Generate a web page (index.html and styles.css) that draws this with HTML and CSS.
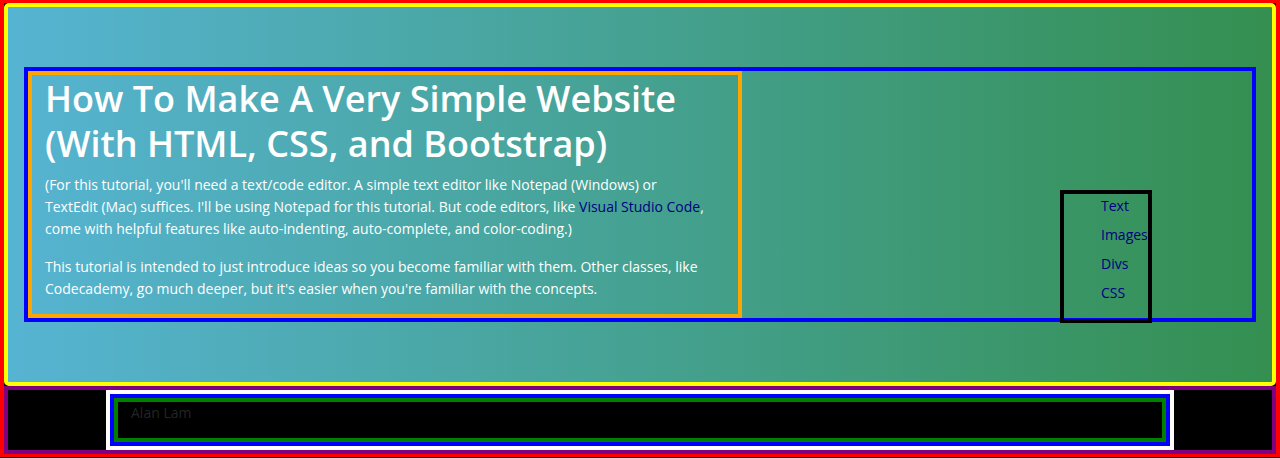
FILE: index.html
```html
<!DOCTYPE html>
<html lang="en">
<head>
<meta charset="utf-8">
<meta name="viewport" content="width=device-width, initial-scale=1">
<title>How To Make A Very Simple Website</title>
<link rel="stylesheet" href="styles.css">
</head>
<body>
<div class="page">
  <header class="hero">
    <div class="row">
      <div class="intro">
        <h1 class="title">How To Make A Very Simple Website (With HTML, CSS, and Bootstrap)</h1>
        <p class="text">(For this tutorial, you'll need a text/code editor. A simple text editor like Notepad (Windows) or TextEdit (Mac) suffices. I'll be using Notepad for this tutorial. But code editors, like <a class="link" href="#">Visual Studio Code</a>, come with helpful features like auto-indenting, auto-complete, and color-coding.)</p>
        <p class="text">This tutorial is intended to just introduce ideas so you become familiar with them. Other classes, like Codecademy, go much deeper, but it's easier when you're familiar with the concepts.</p>
      </div>
      <nav class="nav">
        <ul class="list">
          <li><a class="link" href="#text">Text</a></li>
          <li><a class="link" href="#images">Images</a></li>
          <li><a class="link" href="#divs">Divs</a></li>
          <li><a class="link" href="#css">CSS</a></li>
        </ul>
      </nav>
    </div>
  </header>
  <footer class="footer">
    <div class="container">
      <div class="footer-row">
        <div class="author">Alan Lam</div>
      </div>
    </div>
  </footer>
</div>
</body>
</html>
```

FILE: styles.css
```css
* {
  box-sizing: border-box;
}

body {
  margin: 0;
  background: #000;
  font-family: "Segoe UI", "Open Sans", "Noto Sans", sans-serif;
  font-size: 14px;
  line-height: 22px;
}

.page {
  border: 4px solid red;
  border-width: 3px 4px;
}

.hero {
  padding: 60px 16px;
  border: 4px solid yellow;
  border-radius: 5px;
  background: linear-gradient(to right, #56b4d3, #348f50) border-box;
}

.row {
  display: flex;
  align-items: flex-end;
  border: 4px solid blue;
}

.intro {
  flex: 0 0 58.3333%;
  padding: 1px 28px 14px 13px;
  border: 4px solid orange;
  color: #fff;
}

.title {
  margin: 0 0 8px;
  font-size: 36px;
  font-weight: 600;
  line-height: 45px;
}

.text {
  margin: 0;
}

.text + .text {
  margin-top: 16px;
}

.link {
  color: navy;
  text-decoration: none;
}

.nav {
  width: 92px;
  margin: 0 100px -5px auto;
  border: 4px solid black;
}

.list {
  display: grid;
  gap: 7px;
  margin: 0;
  padding: 1px 0 15px 37px;
  list-style: none;
}

.footer {
  padding: 0 98px;
  border: 4px solid purple;
}

.container {
  border: 4px solid #fff;
}

.footer-row {
  border: 4px solid blue;
}

.author {
  padding: 0 13px 14px;
  border: 4px solid green;
  color: #212529;
}
```
